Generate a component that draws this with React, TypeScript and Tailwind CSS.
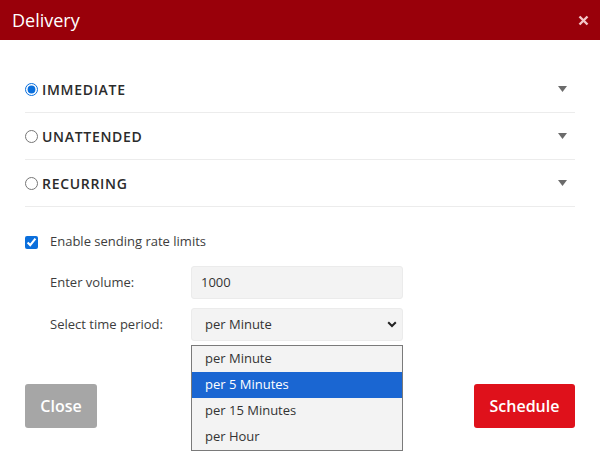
import { useState } from 'react';

const modes = ['IMMEDIATE', 'UNATTENDED', 'RECURRING'];
const periods = ['per Minute', 'per 5 Minutes', 'per 15 Minutes', 'per Hour'];

function Caret() {
  return (
    <svg width="9" height="7" viewBox="0 0 9 7" className="text-[#6b6b6b]">
      <path d="M0 0h9L4.5 6z" fill="currentColor" />
    </svg>
  );
}

function Chevron() {
  return (
    <svg width="10" height="7" viewBox="0 0 10 7">
      <path d="M1.2 1.2 5 5l3.8-3.8" fill="none" stroke="#222" strokeWidth="2" />
    </svg>
  );
}

export default function App() {
  const [mode, setMode] = useState('IMMEDIATE');
  const [active] = useState(1);

  return (
    <div
      className="relative h-[453px] w-[600px] overflow-hidden bg-white"
      style={{ fontFamily: '"Open Sans", "Noto Sans", sans-serif' }}
    >
      {/* header */}
      <div className="flex h-10 items-center justify-between bg-[#99000a] pl-3 pr-[11px]">
        <h2 className="text-[18px] text-white">Delivery</h2>
        <svg width="11" height="11" viewBox="0 0 11 11">
          <path d="M1.5 1.5l8 8M9.5 1.5l-8 8" stroke="#f3c6c8" strokeWidth="2.4" />
        </svg>
      </div>

      <div className="px-[25px] pt-[26px]">
        {/* delivery modes */}
        {modes.map((m) => (
          <div
            key={m}
            className="flex h-[47px] items-center justify-between border-b border-[#ececec] pr-[8px]"
            onClick={() => setMode(m)}
          >
            <label className="flex items-center gap-[4px] text-[14px] font-semibold tracking-[0.7px] text-[#2b2b2b]">
              <input
                type="radio"
                name="mode"
                checked={mode === m}
                onChange={() => setMode(m)}
                className="m-0 h-[13px] w-[13px] accent-[#0b6fdc]"
              />
              {m}
            </label>
            <Caret />
          </div>
        ))}

        {/* rate limits */}
        <label className="mt-[25px] flex h-5 items-center gap-3 text-[13px] text-[#3d3d3d]">
          <input type="checkbox" defaultChecked className="m-0 h-[13px] w-[13px] accent-[#0b6fdc]" />
          Enable sending rate limits
        </label>

        <div className="mt-[14px] flex items-center pl-[25px]">
          <span className="w-[141px] text-[13px] text-[#3d3d3d]">Enter volume:</span>
          <div className="flex h-[33px] w-[212px] items-center rounded-[3px] border border-[#ebebeb] bg-[#f3f3f3] px-[9px] text-[13px] text-[#333]">
            1000
          </div>
        </div>

        <div className="mt-[9px] flex items-center pl-[25px]">
          <span className="w-[141px] text-[13px] text-[#3d3d3d]">Select time period:</span>
          <div className="flex h-[33px] w-[212px] items-center justify-between rounded-[3px] border border-[#ebebeb] bg-[#f3f3f3] pl-[13px] pr-[5px] text-[13px] text-[#333]">
            per Minute
            <Chevron />
          </div>
        </div>

        {/* actions */}
        <div className="mt-[43px] flex justify-between">
          <button className="h-11 w-[72px] rounded-[3px] bg-[#a6a6a6] text-[16px] font-semibold text-white">
            Close
          </button>
          <button className="h-11 w-[101px] rounded-[3px] bg-[#df111b] text-[16px] font-semibold text-white">
            Schedule
          </button>
        </div>
      </div>

      {/* open select list */}
      <div className="absolute left-[191px] top-[345px] w-[212px] border border-[#7a7a7a] bg-[#f3f3f3]">
        {periods.map((p, i) => (
          <div
            key={p}
            className={
              i === active
                ? 'flex h-[26px] items-center bg-[#1a66d2] pl-[13px] text-[13px] text-white'
                : 'flex h-[26px] items-center pl-[13px] text-[13px] text-[#333]'
            }
          >
            {p}
          </div>
        ))}
      </div>
    </div>
  );
}
